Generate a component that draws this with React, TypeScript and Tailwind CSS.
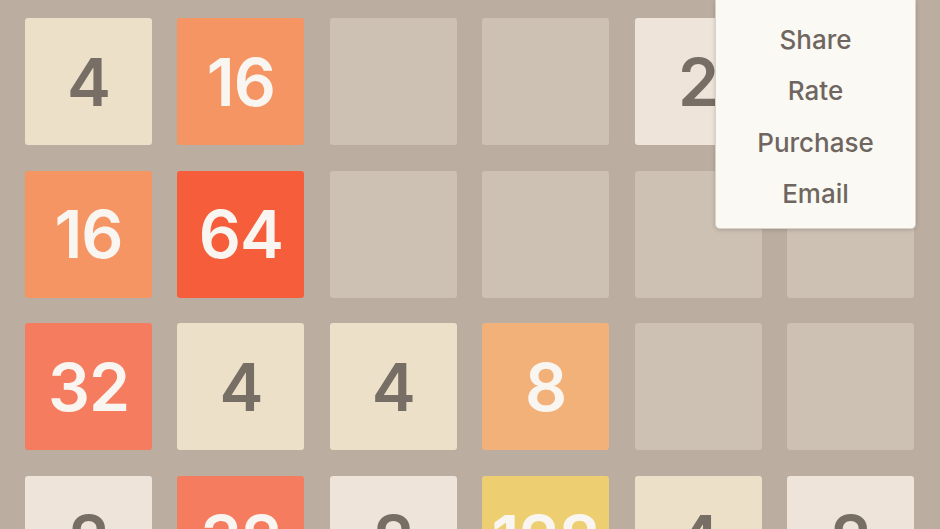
import React from "react";

type Cell = number | null;

const board: Cell[][] = [
  [4, 16, null, null, 2, null],
  [16, 64, null, null, null, null],
  [32, 4, 4, 8, null, null],
  [2, 32, 2, 128, 4, 2],
];

const tileStyle: Record<number, string> = {
  2: "bg-[#eee4da] text-[#776e65]",
  4: "bg-[#ede0c8] text-[#776e65]",
  8: "bg-[#f2b179] text-[#f9f6f2]",
  16: "bg-[#f59563] text-[#f9f6f2]",
  32: "bg-[#f67c5f] text-[#f9f6f2]",
  64: "bg-[#f65e3b] text-[#f9f6f2]",
  128: "bg-[#edcf72] text-[#f9f6f2]",
};

function Tile({ value }: { value: Cell }) {
  if (value === null) {
    return <div className="w-[127px] h-[127px] rounded-[3px] bg-[#cdc1b4]" />;
  }
  return (
    <div
      className={`w-[127px] h-[127px] rounded-[3px] flex items-center justify-center font-semibold text-[66px] leading-none tracking-[-1px] ${tileStyle[value]}`}
      style={{ fontFamily: "Inter, 'Open Sans', sans-serif" }}
    >
      {value}
    </div>
  );
}

const menuItems = ["Share", "Rate", "Purchase", "Email"];

export default function App() {
  return (
    <div className="relative w-[940px] h-[529px] overflow-hidden bg-[#bbada0]">
      <div className="grid grid-cols-[repeat(6,127px)] gap-x-[25.4px] gap-y-[25.6px] pl-[25px] pt-[18px]">
        {board.flat().map((v, i) => (
          <Tile key={i} value={v} />
        ))}
      </div>

      <div
        className="absolute left-[715px] top-0 w-[201px] h-[229px] bg-[#fbf9f4] rounded-b-[5px] border border-t-0 border-[#d9d2c8] shadow-[0_1px_4px_rgba(0,0,0,0.18)] flex flex-col pt-[14px]"
        style={{ fontFamily: "Inter, 'Open Sans', sans-serif" }}
      >
        {menuItems.map((m) => (
          <div
            key={m}
            className="h-[51.3px] flex items-center justify-center text-[26px] font-medium text-[#6e665f]"
          >
            {m}
          </div>
        ))}
      </div>
    </div>
  );
}
